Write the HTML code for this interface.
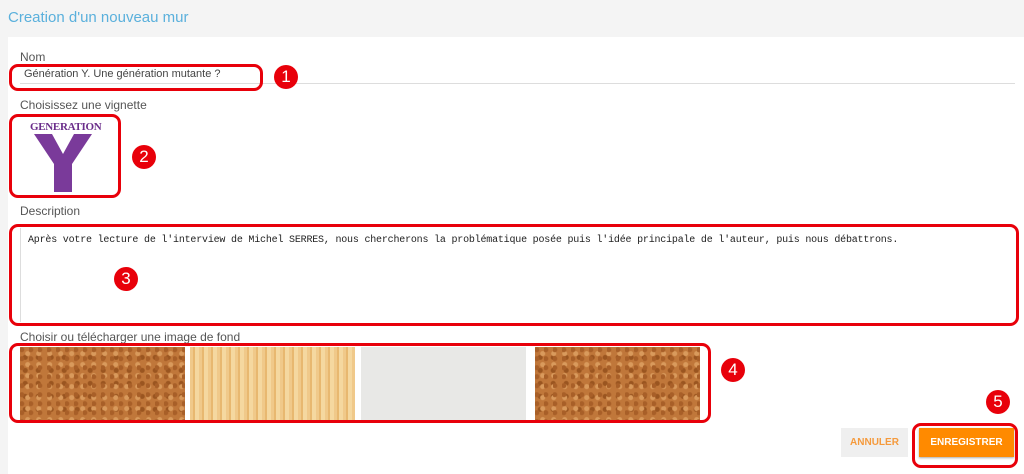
<!DOCTYPE html>
<html><head><meta charset="utf-8"><style>
*{margin:0;padding:0;box-sizing:border-box}
body{width:1024px;height:474px;background:#f4f4f4;font-family:"Liberation Sans",sans-serif;position:relative;overflow:hidden}
.a{position:absolute}
.card{left:8px;top:37px;width:1016px;height:437px;background:#fff}
.lbl{font-size:12px;color:#555}
.red{border:3px solid #e8000a;border-radius:9px}
.num{width:24px;height:24px;border-radius:50%;background:#e8000a;color:#fff;font-size:17px;text-align:center;line-height:24px}
.cork{background:#c0773a;background-image:radial-gradient(circle at 20% 30%,#a85f28 2px,transparent 3px),radial-gradient(circle at 70% 60%,#d99a5c 2px,transparent 3px),radial-gradient(circle at 40% 80%,#9a5520 2px,transparent 3px);background-size:9px 9px,11px 11px,13px 13px}
</style></head><body>
<div class="a" style="left:8px;top:9px;font-size:15px;color:#5ab0dc">Creation d'un nouveau mur</div>
<div class="a card"></div>
<div class="a lbl" style="left:20px;top:50px">Nom</div>
<div class="a" style="left:20px;top:83px;width:995px;height:1px;background:#ddd"></div>
<div class="a" style="left:24px;top:68px;font-size:11px;color:#444">Génération Y. Une génération mutante ?</div>
<div class="a red" style="left:9px;top:64px;width:254px;height:27px"></div>
<div class="a num" style="left:274px;top:65px">1</div>
<div class="a lbl" style="left:20px;top:98px">Choisissez une vignette</div>
<div class="a" style="left:30px;top:121px;font-family:'Liberation Serif',serif;font-weight:bold;font-size:11px;color:#6a2d8a;letter-spacing:-0.3px">GENERATION</div>
<svg class="a" style="left:34px;top:134px" width="58" height="58"><path d="M0 0h18l11 20 11-20h18l-20 30v28h-18v-28z" fill="#7a3a9a"/></svg>
<div class="a red" style="left:9px;top:114px;width:112px;height:84px"></div>
<div class="a num" style="left:132px;top:145px">2</div>
<div class="a lbl" style="left:20px;top:204px">Description</div>
<div class="a" style="left:20px;top:228px;width:994px;height:94px;border-left:1px solid #ddd"></div>
<div class="a" style="left:28px;top:235px;font-family:'Liberation Mono',monospace;font-size:10px;color:#222;letter-spacing:-0.2px">Après votre lecture de l'interview de Michel SERRES, nous chercherons la problématique posée puis l'idée principale de l'auteur, puis nous débattrons.</div>
<div class="a red" style="left:9px;top:224px;width:1010px;height:102px"></div>
<div class="a num" style="left:114px;top:267px">3</div>
<div class="a lbl" style="left:20px;top:330px">Choisir ou télécharger une image de fond</div>
<div class="a cork" style="left:20px;top:347px;width:165px;height:73px"></div>
<div class="a" style="left:190px;top:347px;width:165px;height:73px;background:repeating-linear-gradient(90deg,#f0c98a 0 3px,#e8b870 3px 5px,#f5d8a0 5px 9px)"></div>
<div class="a" style="left:361px;top:347px;width:165px;height:73px;background:#e8e8e6"></div>
<div class="a cork" style="left:535px;top:347px;width:165px;height:73px"></div>
<div class="a red" style="left:9px;top:343px;width:702px;height:80px"></div>
<div class="a num" style="left:721px;top:358px">4</div>
<div class="a" style="left:841px;top:428px;width:67px;height:29px;background:#efefef;color:#f59a3c;font-size:10px;font-weight:bold;text-align:center;line-height:29px">ANNULER</div>
<div class="a" style="left:919px;top:428px;width:95px;height:29px;background:#ff8a00;color:#fff;font-size:10px;font-weight:bold;text-align:center;line-height:29px;box-shadow:0 1px 2px #aaa">ENREGISTRER</div>
<div class="a red" style="left:912px;top:423px;width:106px;height:45px"></div>
<div class="a num" style="left:986px;top:390px">5</div>
</body></html>
